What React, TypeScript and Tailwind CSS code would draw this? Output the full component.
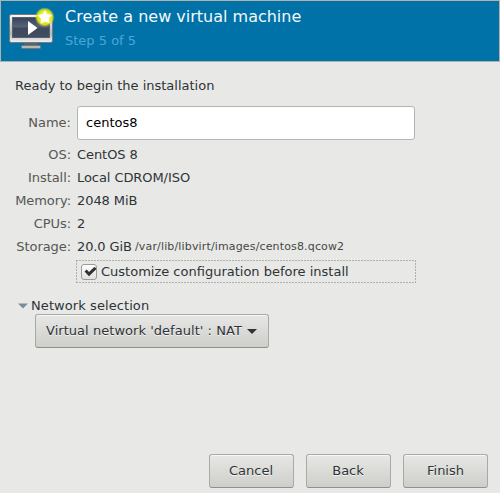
import type { ReactNode } from 'react';

const buttonLook =
  'flex items-center rounded-[3px] border border-[#a8aaa6] border-b-[#8f918d] bg-linear-to-b from-[#e7e7e5] to-[#cececb] shadow-[inset_0_1px_0_#f7f7f6] [text-shadow:0_1px_0_#f4f4f3]';

const dashedEdges =
  'bg-[repeating-linear-gradient(90deg,#aeb0ad_0_2px,transparent_2px_3px),repeating-linear-gradient(90deg,#aeb0ad_0_2px,transparent_2px_3px),repeating-linear-gradient(0deg,#aeb0ad_0_2px,transparent_2px_3px),repeating-linear-gradient(0deg,#aeb0ad_0_2px,transparent_2px_3px)] bg-[length:100%_1px,100%_1px,1px_100%,1px_100%] bg-[position:0_0,0_100%,0_0,100%_0] bg-no-repeat';

function MachineIcon() {
  return (
    <svg className="block h-12 w-12" viewBox="0 0 48 48">
      <defs>
        <linearGradient id="frame" x1="0" y1="0" x2="0" y2="1">
          <stop offset="0" stopColor="#f8f8f8" />
          <stop offset="0.7" stopColor="#b9b9b9" />
          <stop offset="0.86" stopColor="#d8d8d8" />
          <stop offset="1" stopColor="#f2f2f2" />
        </linearGradient>
        <linearGradient id="screen" x1="0" y1="0" x2="0" y2="1">
          <stop offset="0" stopColor="#35445b" />
          <stop offset="0.45" stopColor="#566174" />
          <stop offset="0.55" stopColor="#3e495d" />
          <stop offset="1" stopColor="#424d60" />
        </linearGradient>
        <radialGradient id="glow">
          <stop offset="0.5" stopColor="#f2f218" />
          <stop offset="0.75" stopColor="#e2e61c" stopOpacity="0.9" />
          <stop offset="1" stopColor="#c8d830" stopOpacity="0" />
        </radialGradient>
      </defs>
      <path d="M16 38h12l1 4H15z" fill="#5d6264" />
      <rect x="12.5" y="41.5" width="19" height="3" rx="0.8" fill="#b8b8b8" stroke="#72777a" />
      <rect x="0.5" y="10.5" width="43" height="28" rx="1.8" fill="url(#frame)" stroke="#777a7d" />
      <rect x="3.5" y="13.5" width="37" height="20" fill="url(#screen)" stroke="#59616e" />
      <path d="M19 17v14l9.5-7z" fill="#fff" />
      <circle cx="35.7" cy="13.2" r="10" fill="url(#glow)" />
      <path
        d="M36 6.8l1.9 3.9 4.4.4-3.1 3.2 1 4.5-4.2-1.9-4 2.3.6-4.7-3.3-3.1 4.6-.8z"
        fill="#fff"
        stroke="#fff"
        strokeWidth="1"
        strokeLinejoin="round"
      />
    </svg>
  );
}

function Row({ label, children }: { label: string; children: ReactNode }) {
  return (
    <div className="flex h-[23px] items-center tracking-[-0.07px]">
      <div className="mr-1.5 w-14 shrink-0 text-right text-[#555753]">{label}</div>
      {children}
    </div>
  );
}

export default function App() {
  return (
    <div className="flex h-[493px] w-[500px] flex-col overflow-hidden bg-[#e8e8e7] font-['DejaVu_Sans',sans-serif] text-[13px] leading-4 whitespace-nowrap text-[#2e3436]">
      <header className="flex h-[62px] shrink-0 border border-[#b0b3ac] bg-[#0072a8]">
        <div className="ml-2 pt-[3px]">
          <MachineIcon />
        </div>
        <div className="ml-2 pt-[6px]">
          <h1 className="text-[16px] leading-5 text-[#f4f8fa]">Create a new virtual machine</h1>
          <p className="mt-[6px] text-[#4ba6d8]">Step 5 of 5</p>
        </div>
      </header>

      <main className="flex flex-col pt-[15px] pl-[15px]">
        <p className="h-[18px] leading-[18px]">Ready to begin the installation</p>
        <div className="mt-[11px] flex h-[34px] items-center">
          <div className="mr-1.5 w-14 shrink-0 text-right text-[#555753]">Name:</div>
          <div className="flex h-[34px] w-[338px] items-center rounded-[3px] border border-[#b4b6b1] bg-white pl-2 text-black">
            centos8
          </div>
        </div>
        <div className="mt-[3px]">
          <Row label="OS:">CentOS 8</Row>
          <Row label="Install:">Local CDROM/ISO</Row>
          <Row label="Memory:">2048 MiB</Row>
          <Row label="CPUs:">2</Row>
          <Row label="Storage:">
            <span className="w-[57px] tracking-[-0.1px]">20.0 GiB</span>
            <span className="ml-[1px] text-[11px] tracking-[0.15px] text-[#444846]">/var/lib/libvirt/images/centos8.qcow2</span>
          </Row>
        </div>
        <label className={`${dashedEdges} mt-[2px] ml-[61px] flex h-[23px] w-[340px] items-center pl-[5px]`}>
          <span className="flex h-4 w-4 items-center justify-center rounded-[3px] border border-[#9a9c98] bg-linear-to-b from-white to-[#e0e0df]">
            <svg className="ml-px h-3 w-3" viewBox="0 0 12 12">
              <path d="M0.5 5.5L2.7 3.6 5 6 10.3 0.9 12 2v1.6L5 10.3z" fill="#2e3436" />
            </svg>
          </span>
          <span className="ml-1">Customize configuration before install</span>
        </label>

        <div className="mt-[14px] ml-[3px] flex h-[17px] items-center">
          <svg className="h-[6px] w-[10px]" viewBox="0 0 10 6">
            <path d="M0 0.5h10L5 5.5z" fill="#729098" />
          </svg>
          <span className="ml-[3px] tracking-[0.08px]">Network selection</span>
        </div>
        <button className={`${buttonLook} ml-5 h-[34px] w-[234px] pl-[10px]`}>
          <span className="tracking-[0.04px]">Virtual network 'default' : NAT</span>
          <svg className="ml-[5px] h-[5px] w-[10px]" viewBox="0 0 10 5">
            <path d="M0 0h10L5 5z" fill="#2e3436" />
          </svg>
        </button>
      </main>

      <footer className="mt-auto flex justify-end gap-3 pr-3 pb-[5px]">
        <button className={`${buttonLook} h-[34px] w-[85px] justify-center pr-px`}>Cancel</button>
        <button className={`${buttonLook} h-[34px] w-[85px] justify-center pr-px`}>Back</button>
        <button className={`${buttonLook} h-[34px] w-[85px] justify-center`}>Finish</button>
      </footer>
    </div>
  );
}
